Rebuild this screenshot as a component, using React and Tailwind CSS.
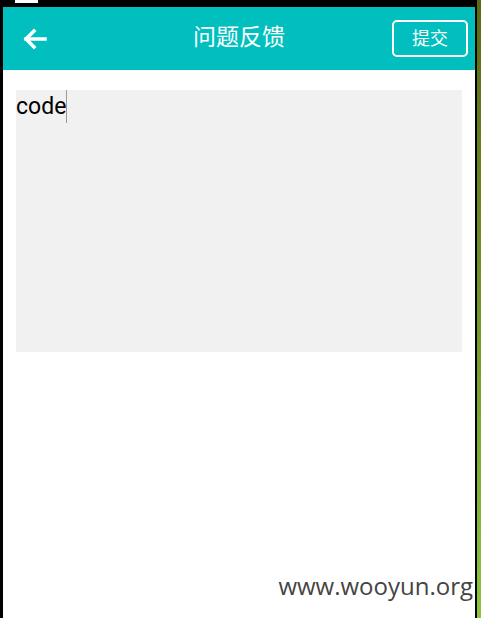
import React from 'react';

const BackArrow = () => (
    <svg width="26" height="22" viewBox="0 0 26 22" fill="none" stroke="white" strokeWidth="3.5" strokeLinecap="square" strokeLinejoin="miter">
        <path d="M23 11H4" />
        <path d="M12 3L4 11l8 8" />
    </svg>
);

const App = () => {
    return (
        <div className="relative flex h-[618px] w-[481px] bg-black overflow-hidden" style={{ fontFamily: 'Roboto, "Noto Sans CJK SC", sans-serif' }}>
            {/* left frame */}
            <div className="w-[3px] bg-black" />

            <div className="flex flex-1 flex-col">
                {/* status bar strip */}
                <div className="h-[7px] bg-black pl-[12px]">
                    <div className="h-[3px] w-[23px] bg-white" />
                </div>

                {/* title bar */}
                <div className="flex h-[63px] items-center bg-[#00bfbe]">
                    <div className="flex w-[90px] pl-[19px]">
                        <BackArrow />
                    </div>
                    <span className="flex-1 text-center text-[23px] text-white">问题反馈</span>
                    <div className="flex w-[90px] justify-end pr-[7px]">
                        <button className="flex h-[37px] w-[76px] items-center justify-center rounded-[5px] border-2 border-white text-[18px] text-white">
                            提交
                        </button>
                    </div>
                </div>

                {/* content */}
                <div className="flex-1 bg-white px-[13px] pt-[20px]">
                    <div className="h-[262px] bg-[#f1f1f1]">
                        <div className="flex items-start">
                            <span className="text-[23px] leading-[33px] text-black">code</span>
                            <span className="h-[33px] w-[1px] bg-[#9a9a9a]" />
                        </div>
                    </div>
                </div>
            </div>

            {/* right frame */}
            <div className="w-[2px] bg-black" />
            <div className="w-[4px] bg-gradient-to-b from-[#5b6a12] to-[#8cc63f]" />

            {/* watermark */}
            <span className="absolute bottom-[14px] right-[8px] text-[24px] text-[#444]" style={{ fontFamily: '"Open Sans", sans-serif' }}>
                www.wooyun.org
            </span>
        </div>
    );
};

export default App;
